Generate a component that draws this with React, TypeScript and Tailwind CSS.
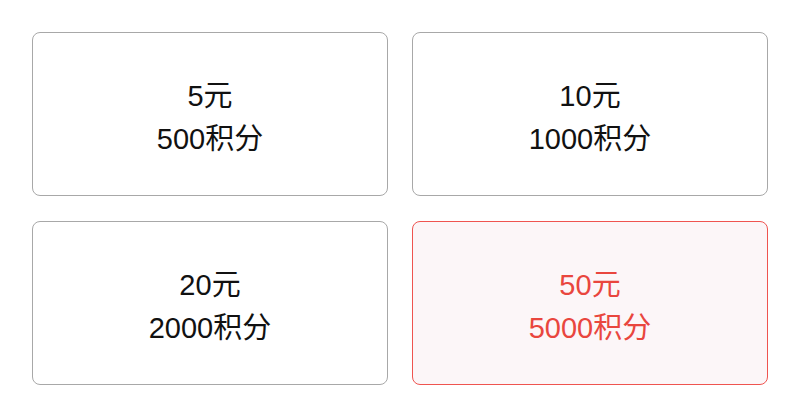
const options = [
  { yuan: 5, points: 500 },
  { yuan: 10, points: 1000 },
  { yuan: 20, points: 2000 },
  { yuan: 50, points: 5000 },
];

export default function App() {
  const selected = 3;
  return (
    <div
      className="w-[792px] h-[406px] bg-white pl-8 pr-6 pt-8"
      style={{ fontFamily: '"Liberation Sans", "Noto Sans CJK SC", sans-serif' }}
    >
      <div className="grid grid-cols-2 gap-x-6 gap-y-[25px]">
        {options.map((o, i) => {
          const active = i === selected;
          return (
            <div
              key={o.yuan}
              className={
                active
                  ? 'h-[164px] pt-[8px] rounded-lg border border-[#ef5450] bg-[#fcf6f8] text-[#e9463e] flex flex-col items-center justify-center'
                  : 'h-[164px] pt-[8px] rounded-lg border border-[#a8a8a8] bg-white text-[#111111] flex flex-col items-center justify-center'
              }
            >
              <div className="text-[29px] leading-[43px]">{o.yuan}元</div>
              <div className="text-[29px] leading-[43px]">{o.points}积分</div>
            </div>
          );
        })}
      </div>
    </div>
  );
}
